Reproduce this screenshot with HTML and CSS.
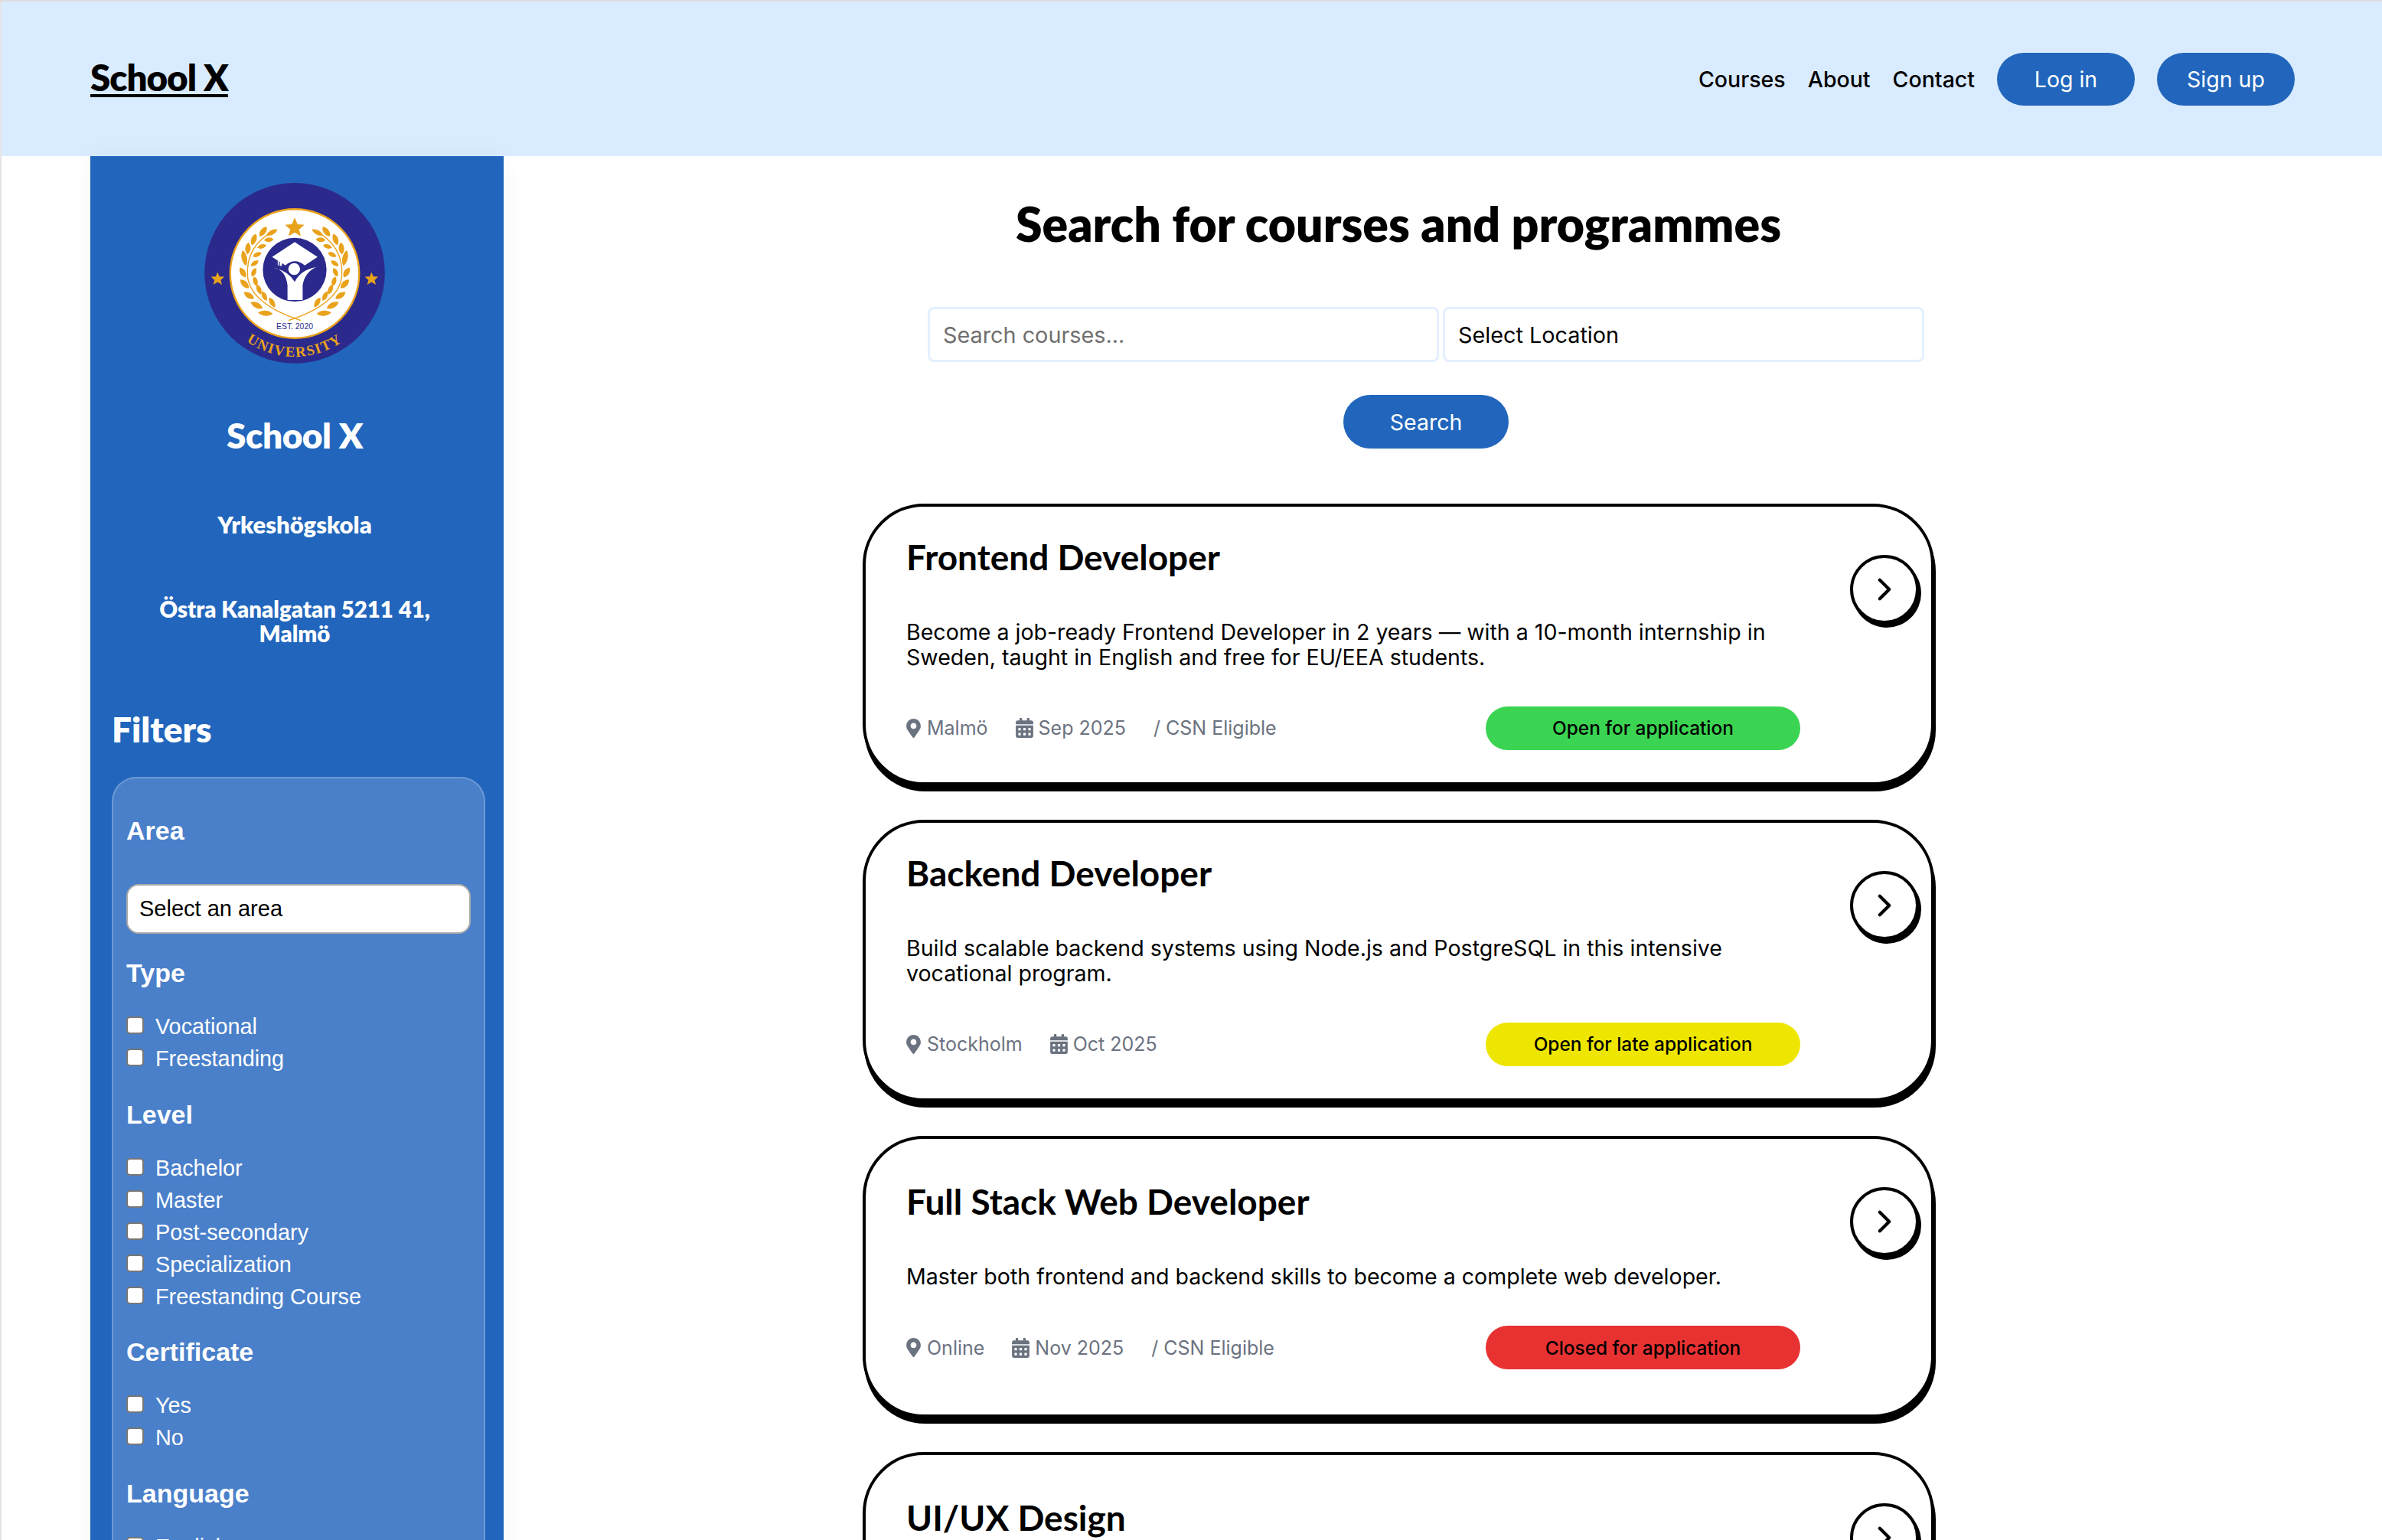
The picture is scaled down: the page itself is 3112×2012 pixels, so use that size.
FILE: index.html
```html
<!DOCTYPE html>
<html lang="en">
<head>
<meta charset="utf-8">
<title>School X</title>
<link rel="stylesheet" href="styles.css">
</head>
<body>
<svg class="defs" width="0" height="0" aria-hidden="true">
  <defs>
    <symbol id="pin" viewBox="0 0 384 512"><path d="M172.268 501.67C26.97 291.031 0 268.413 0 192 0 85.961 85.961 0 192 0s192 85.961 192 192c0 76.413-26.97 99.031-172.268 309.67-9.535 13.774-29.93 13.773-39.464 0zM192 272c44.183 0 80-35.817 80-80s-35.817-80-80-80-80 35.817-80 80 35.817 80 80 80z"/></symbol>
    <symbol id="cal" viewBox="0 0 448 512"><path d="M0 464c0 26.5 21.5 48 48 48h352c26.5 0 48-21.5 48-48V192H0v272zm320-196c0-6.6 5.4-12 12-12h40c6.6 0 12 5.4 12 12v40c0 6.6-5.4 12-12 12h-40c-6.6 0-12-5.4-12-12v-40zm0 128c0-6.6 5.4-12 12-12h40c6.6 0 12 5.4 12 12v40c0 6.6-5.4 12-12 12h-40c-6.6 0-12-5.4-12-12v-40zM192 268c0-6.6 5.4-12 12-12h40c6.6 0 12 5.4 12 12v40c0 6.6-5.4 12-12 12h-40c-6.6 0-12-5.4-12-12v-40zm0 128c0-6.6 5.4-12 12-12h40c6.6 0 12 5.4 12 12v40c0 6.6-5.4 12-12 12h-40c-6.6 0-12-5.4-12-12v-40zM64 268c0-6.6 5.4-12 12-12h40c6.6 0 12 5.4 12 12v40c0 6.6-5.4 12-12 12H76c-6.6 0-12-5.4-12-12v-40zm0 128c0-6.6 5.4-12 12-12h40c6.6 0 12 5.4 12 12v40c0 6.6-5.4 12-12 12H76c-6.6 0-12-5.4-12-12v-40zM400 64h-48V16c0-8.8-7.2-16-16-16h-32c-8.8 0-16 7.2-16 16v48H160V16c0-8.8-7.2-16-16-16h-32c-8.8 0-16 7.2-16 16v48H48C21.5 64 0 85.5 0 112v48h448v-48c0-26.5-21.5-48-48-48z"/></symbol>
    <symbol id="chev" viewBox="0 0 19 32"><path d="M3 3l13 13L3 29" fill="none" stroke="#000" stroke-width="4.4" stroke-linecap="round" stroke-linejoin="round"/></symbol>
    <path id="leaf" d="M0-26C14-13 14 12 0 26C-14 12-14-13 0-26Z"/>
    <g id="wreath" fill="#e9a21c">
      <path d="M392 240Q272 300 283 425Q300 530 490 592" fill="none" stroke="#e9a21c" stroke-width="4"/>
      <use href="#leaf" transform="translate(352 564) rotate(95) scale(1 1.1)"/>
      <use href="#leaf" transform="translate(318 533) rotate(117)"/>
      <use href="#leaf" transform="translate(288 495) rotate(123) scale(1 .9)"/>
      <use href="#leaf" transform="translate(271 450) rotate(135) scale(1 .9)"/>
      <use href="#leaf" transform="translate(264 405) rotate(150) scale(1 .85)"/>
      <use href="#leaf" transform="translate(270 350) rotate(-12) scale(1 1.2)"/>
      <use href="#leaf" transform="translate(284 312) rotate(5) scale(1 .9)"/>
      <use href="#leaf" transform="translate(307 277) rotate(20) scale(1 .9)"/>
      <use href="#leaf" transform="translate(343 246) rotate(37) scale(1 .9)"/>
      <use href="#leaf" transform="translate(377 250) rotate(62) scale(.8 .95)"/>
      <use href="#leaf" transform="translate(378 522) rotate(-30) scale(.9 .85)"/>
      <use href="#leaf" transform="translate(348 497) rotate(-25) scale(.85 .8)"/>
      <use href="#leaf" transform="translate(327 472) rotate(-22) scale(.85 .8)"/>
      <use href="#leaf" transform="translate(313 440) rotate(-15) scale(.85 .75)"/>
      <use href="#leaf" transform="translate(307 405) rotate(25) scale(.85 .7)"/>
      <use href="#leaf" transform="translate(310 370) rotate(55) scale(.8 .7)"/>
      <use href="#leaf" transform="translate(320 336) rotate(65) scale(.8 .7)"/>
      <use href="#leaf" transform="translate(338 304) rotate(75) scale(.8 .7)"/>
      <use href="#leaf" transform="translate(365 278) rotate(85) scale(.8 .7)"/>
    </g>
  </defs>
</svg>

<header class="topbar">
  <a class="brand" href="#">School X</a>
  <nav class="topnav">
    <a class="navlink" href="#">Courses</a>
    <a class="navlink" href="#">About</a>
    <a class="navlink" href="#">Contact</a>
    <a class="pill-btn" href="#">Log in</a>
    <a class="pill-btn" href="#">Sign up</a>
  </nav>
</header>

<div class="layout">
  <aside class="sidebar">
    <div class="school">
      <svg class="logo" viewBox="115 57 702 703" role="img" aria-label="University logo">
        <circle cx="466" cy="408" r="351" fill="#2b2a8c"/>
        <circle cx="466" cy="410" r="251" fill="#fff" stroke="#e9a21c" stroke-width="7"/>
        <circle cx="466" cy="395" r="124" fill="#2b2a8c"/>
        <use href="#wreath"/>
        <use href="#wreath" transform="translate(932 0) scale(-1 1)"/>
        <polygon fill="#e9a21c" points="466,192 477,218 504,220 483,238 490,264 466,250 442,264 449,238 428,220 455,218"/>
        <polygon fill="#e9a21c" points="166,404 173,421 192,422 178,435 183,453 166,443 149,453 154,435 140,422 159,421"/>
        <polygon fill="#e9a21c" points="765,404 772,421 791,422 777,435 782,453 765,443 748,453 753,435 739,422 758,421"/>
        <path fill="#fff" d="M378 345L466 287L555 345L505 378Q466 345 430 378Z"/>
        <path fill="none" stroke="#fff" stroke-width="4" d="M402 345V378"/>
        <rect x="408" y="362" width="8" height="18" fill="#fff"/>
        <path fill="#fff" d="M385 388Q430 395 438 455V513H497V455Q505 405 550 385Q490 395 466 442Q440 400 385 388Z"/>
        <circle cx="464" cy="392" r="23" fill="#fff"/>
        <path id="logoArc" d="M141 408A325 325 0 0 0 791 408" fill="none"/>
        <text class="logo-est" x="466" y="625" text-anchor="middle">EST. 2020</text>
        <text class="logo-uni"><textPath href="#logoArc" startOffset="50%" text-anchor="middle">UNIVERSITY</textPath></text>
      </svg>
      <h2 class="school-name">School X</h2>
      <p class="school-type">Yrkeshögskola</p>
      <p class="school-addr">Östra Kanalgatan 5211 41,<br>Malmö</p>
    </div>
    <h2 class="filters-title">Filters</h2>
    <form class="filter-box">
      <h3 class="filter-head filter-head-first">Area</h3>
      <div class="fake-select">Select an area</div>
      <h3 class="filter-head">Type</h3>
      <label class="check"><input type="checkbox">Vocational</label>
      <label class="check"><input type="checkbox">Freestanding</label>
      <h3 class="filter-head">Level</h3>
      <label class="check"><input type="checkbox">Bachelor</label>
      <label class="check"><input type="checkbox">Master</label>
      <label class="check"><input type="checkbox">Post-secondary</label>
      <label class="check"><input type="checkbox">Specialization</label>
      <label class="check"><input type="checkbox">Freestanding Course</label>
      <h3 class="filter-head">Certificate</h3>
      <label class="check"><input type="checkbox">Yes</label>
      <label class="check"><input type="checkbox">No</label>
      <h3 class="filter-head">Language</h3>
      <label class="check"><input type="checkbox">English</label>
    </form>
  </aside>

  <main class="main">
    <h1 class="page-title">Search for courses and programmes</h1>
    <div class="search">
      <div class="search-row">
        <div class="field field-search placeholder">Search courses...</div>
        <div class="field field-loc">Select Location</div>
      </div>
      <a class="pill-btn search-btn" href="#">Search</a>
    </div>

    <article class="card">
      <div class="card-body">
        <h2 class="card-title">Frontend Developer</h2>
        <p class="card-desc">Become a job-ready Frontend Developer in 2 years — with a 10-month internship in Sweden, taught in English and free for EU/EEA students.</p>
        <div class="card-foot">
          <div class="meta">
            <span class="meta-item"><svg class="ic-pin"><use href="#pin"/></svg>Malmö</span>
            <span class="meta-item"><svg class="ic-cal"><use href="#cal"/></svg>Sep 2025</span>
            <span class="meta-item">/ CSN Eligible</span>
          </div>
          <span class="status status-open">Open for application</span>
        </div>
      </div>
      <a class="go" href="#"><svg class="ic-chev"><use href="#chev"/></svg></a>
    </article>

    <article class="card">
      <div class="card-body">
        <h2 class="card-title">Backend Developer</h2>
        <p class="card-desc">Build scalable backend systems using Node.js and PostgreSQL in this intensive vocational program.</p>
        <div class="card-foot">
          <div class="meta">
            <span class="meta-item"><svg class="ic-pin"><use href="#pin"/></svg>Stockholm</span>
            <span class="meta-item"><svg class="ic-cal"><use href="#cal"/></svg>Oct 2025</span>
          </div>
          <span class="status status-late">Open for late application</span>
        </div>
      </div>
      <a class="go" href="#"><svg class="ic-chev"><use href="#chev"/></svg></a>
    </article>

    <article class="card">
      <div class="card-body">
        <h2 class="card-title">Full Stack Web Developer</h2>
        <p class="card-desc">Master both frontend and backend skills to become a complete web developer.</p>
        <div class="card-foot">
          <div class="meta">
            <span class="meta-item"><svg class="ic-pin"><use href="#pin"/></svg>Online</span>
            <span class="meta-item"><svg class="ic-cal"><use href="#cal"/></svg>Nov 2025</span>
            <span class="meta-item">/ CSN Eligible</span>
          </div>
          <span class="status status-closed">Closed for application</span>
        </div>
      </div>
      <a class="go" href="#"><svg class="ic-chev"><use href="#chev"/></svg></a>
    </article>

    <article class="card">
      <div class="card-body">
        <h2 class="card-title">UI/UX Design</h2>
        <div class="card-rest"></div>
      </div>
      <a class="go" href="#"><svg class="ic-chev"><use href="#chev"/></svg></a>
    </article>
  </main>
</div>
</body>
</html>
```
FILE: styles.css
```css
* { box-sizing: border-box; }
html, body { margin: 0; height: 100%; }
body {
  height: 100vh;
  overflow: hidden;
  background: #fff;
  border-top: 2px solid #dcdcdc;
  border-left: 2px solid #e4e4e4;
  font-family: Inter, "Liberation Sans", sans-serif;
  color: #000;
}
a { color: inherit; text-decoration: none; }
h1, h2, h3, p { margin: 0; }
.defs { position: absolute; }

.topbar {
  height: 202px;
  background: #d9ebff;
  padding: 0 114px 0 116px;
  display: flex;
  align-items: center;
  justify-content: space-between;
}
.brand {
  margin-bottom: 6px;
  font-family: Lato, sans-serif;
  font-weight: 800;
  font-size: 47.5px;
  letter-spacing: -1px;
  color: #000;
  text-decoration: underline;
  text-decoration-thickness: 4px;
  text-underline-offset: 4px;
}
.topnav { display: flex; align-items: center; gap: 29px; }
.navlink { font-size: 28.5px; font-weight: 500; }
.pill-btn {
  display: flex;
  align-items: center;
  justify-content: center;
  width: 180px;
  height: 69px;
  border-radius: 35px;
  background: #2166bc;
  color: #fff;
  font-size: 28.5px;
}

.layout { display: flex; padding-left: 116px; }
.sidebar {
  flex: none;
  width: 540px;
  height: 1900px;
  background: #2166bc;
  color: #fff;
  padding: 35px 24px 0 28px;
  box-shadow: 0 0 30px rgba(0, 0, 0, .04);
}
.school { padding-right: 10px; text-align: center; font-family: Lato, sans-serif; }
.logo { display: block; width: 236px; height: 236px; margin: 0 auto; }
.logo-est { font-family: "Liberation Sans", sans-serif; font-size: 31px; fill: #2b2a8c; }
.logo-uni { font-family: "Liberation Serif", serif; font-weight: 700; font-size: 56px; letter-spacing: 5px; fill: #e9a21c; }
.school-name { margin-top: 66px; font-size: 46px; line-height: 56px; font-weight: 800; letter-spacing: -.5px; }
.school-type { margin-top: 70px; font-size: 31px; line-height: 36px; font-weight: 800; }
.school-addr { margin-top: 77px; font-size: 29.4px; line-height: 32px; font-weight: 800; }
.filters-title { margin-top: 82px; font-family: Lato, sans-serif; font-size: 46px; line-height: 54px; font-weight: 800; }
.filter-box {
  margin-top: 35px;
  padding: 50px 17px 0;
  min-height: 1000px;
  background: #4a80ca;
  border: 2px solid rgba(255, 255, 255, .2);
  border-radius: 32px;
  font-family: "Liberation Sans", sans-serif;
}
.filter-head { margin-top: 33px; margin-bottom: 30.5px; font-size: 34px; line-height: 37px; font-weight: 700; }
.filter-head-first { margin-top: 0; margin-bottom: 51px; }
.fake-select {
  height: 65px;
  padding: 0 15px;
  display: flex;
  align-items: center;
  background: #fff;
  border: 2px solid #aaa;
  border-radius: 16px;
  color: #000;
  font-size: 29px;
}
.check { display: flex; align-items: center; height: 42px; font-size: 28.8px; }
.check input {
  appearance: none;
  flex: none;
  width: 23px;
  height: 23px;
  margin: 0 15px 4px 0;
  background: #fff;
  border: 2px solid #767676;
  border-radius: 5px;
}

.main { flex: none; width: 1400px; margin-left: 469px; }
.page-title {
  margin-top: 51px;
  text-align: center;
  font-family: Lato, sans-serif;
  font-size: 62.5px;
  line-height: 74px;
  font-weight: 800;
}
.search {
  width: 1302px;
  margin: 72px 0 72px 85px;
  display: flex;
  flex-direction: column;
  align-items: center;
  gap: 43px;
}
.search-row { display: flex; gap: 5px; align-self: stretch; }
.field {
  height: 72px;
  padding: 0 17px;
  display: flex;
  align-items: center;
  border: 3px solid #e4f0ff;
  border-radius: 8px;
  font-size: 28.8px;
}
.field-search { width: 668px; }
.field-loc { width: 629px; }
.placeholder { color: #6f6f6f; }
.search-btn { width: 216px; height: 70px; }

.card {
  display: flex;
  height: 368px;
  width: 1400px;
  margin-bottom: 45px;
  padding-left: 53px;
  background: #fff;
  border: 4px solid #000;
  border-radius: 80px;
  box-shadow: 2px 8px 0 #000;
}
.card-body {
  flex: none;
  width: 1168px;
  align-self: center;
  padding-bottom: 6px;
}
.card-title {
  font-family: Lato, sans-serif;
  font-size: 46px;
  line-height: 58px;
  font-weight: 700;
}
.card-desc { margin-top: 52px; font-size: 28.55px; line-height: 33px; }
.card-foot { margin-top: 48px; display: flex; align-items: center; justify-content: space-between; }
.card-rest { height: 190px; }
.meta { display: flex; align-items: center; gap: 36px; color: #6b7280; font-size: 25px; }
.meta-item { display: inline-flex; align-items: center; }
.ic-pin { width: 19px; height: 25px; margin-right: 8px; fill: #6b7280; }
.ic-cal { width: 23px; height: 26px; margin-right: 7px; fill: #6b7280; }
.status {
  width: 411px;
  height: 57px;
  display: flex;
  align-items: center;
  justify-content: center;
  border-radius: 29px;
  font-size: 24.4px;
  font-weight: 500;
}
.status-open { background: #3bd452; }
.status-late { background: #eee600; }
.status-closed { background: #e83232; }
.go {
  flex: none;
  width: 90px;
  height: 90px;
  margin: 63px 0 0 65px;
  display: flex;
  align-items: center;
  justify-content: center;
  background: #fff;
  border: 4px solid #000;
  border-radius: 50%;
  box-shadow: 3px 5px 0 #000;
}
.ic-chev { width: 18px; height: 32px; }
```
